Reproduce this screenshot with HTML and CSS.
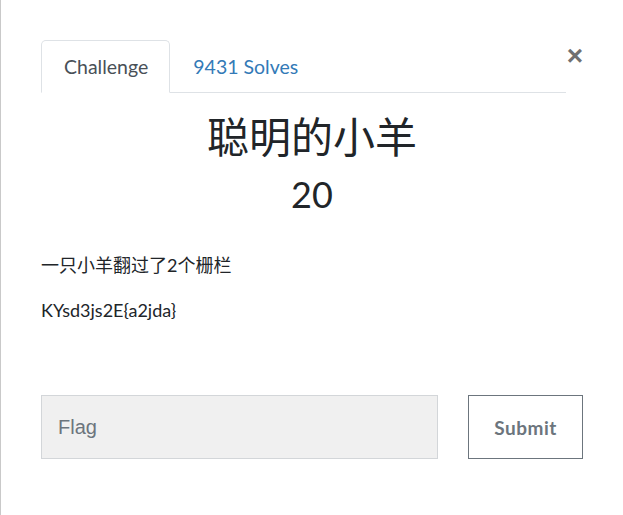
FILE: index.html
```html
<!DOCTYPE html>
<html>
<head>
<meta charset="utf-8">
<link rel="stylesheet" href="styles.css">
</head>
<body>
<div class="modal">
  <div class="head">
    <ul class="tabs">
      <li class="tab active">Challenge</li>
      <li class="tab link">9431 Solves</li>
    </ul>
    <span class="close">&times;</span>
  </div>
  <h1 class="title">聪明的小羊</h1>
  <h2 class="value">20</h2>
  <div class="desc">
    <p>一只小羊翻过了2个栅栏</p>
    <p>KYsd3js2E{a2jda}</p>
  </div>
  <form class="submit-row">
    <input class="flag" type="text" placeholder="Flag">
    <button class="btn" type="button">Submit</button>
  </form>
</div>
</body>
</html>
```

FILE: styles.css
```css
html, body {
  margin: 0;
  padding: 0;
  background: #fff;
}
body {
  font-family: Lato, "Noto Sans CJK SC", sans-serif;
  color: #212529;
  height: 515px;
  border-left: 1px solid #c9c9c9;
  box-sizing: border-box;
}
.modal {
  padding: 40px 40px 0 40px;
  width: 542px;
}
.head {
  display: flex;
  align-items: flex-start;
}
.tabs {
  list-style: none;
  margin: 0;
  padding: 0;
  display: flex;
  flex: 1;
  border-bottom: 1px solid #dee2e6;
  height: 52px;
}
.tab {
  font-size: 19.5px;
  padding: 0 21px 0 22px;
  line-height: 52px;
  border: 1px solid transparent;
  border-top-left-radius: 5px;
  border-top-right-radius: 5px;
  margin-bottom: -1px;
}
.tab.active {
  color: #495057;
  border-color: #dee2e6 #dee2e6 #fff;
  background: #fff;
}
.tab.link {
  color: #337ab7;
}
.close {
  width: 17px;
  text-align: right;
  font-size: 28px;
  line-height: 30px;
  margin-top: 1px;
  color: #707070;
  font-weight: 700;
  font-family: "Liberation Sans", sans-serif;
}
.title {
  text-align: center;
  font-weight: 400;
  font-size: 42px;
  line-height: 50px;
  margin: 19px 0 0;
}
.value {
  text-align: center;
  font-weight: 400;
  font-size: 36px;
  line-height: 44px;
  margin: 10px 0 0;
}
.desc {
  margin-top: 37px;
}
.desc p {
  font-size: 18px;
  line-height: 24px;
  margin: 0 0 21px;
}
.submit-row {
  display: grid;
  grid-template-columns: 397px 115px;
  column-gap: 30px;
  margin-top: 73px;
}
.flag {
  height: 64px;
  box-sizing: border-box;
  margin: 0;
  background: #f0f0f0;
  border: 1px solid #d3d6d9;
  padding: 0 16px;
  font-size: 20px;
  font-family: "Liberation Sans", Arial, sans-serif;
  color: #495057;
  outline: none;
}
.flag::placeholder {
  color: #6c757d;
}
.btn {
  height: 64px;
  margin: 0;
  background: #fff;
  border: 1px solid #6c757d;
  color: #6c757d;
  font-family: Lato, sans-serif;
  font-weight: 700;
  font-size: 19px;
  letter-spacing: 0.5px;
}
```
